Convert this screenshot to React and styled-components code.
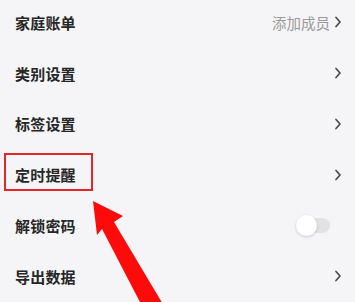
import React from 'react';
import styled, { createGlobalStyle } from 'styled-components';

const GlobalStyle = createGlobalStyle`
    html, body {
        margin: 0;
        padding: 0;
        background-color: #f5f5f7;
    }
    body {
        font-family: "Noto Sans CJK SC", "Noto Sans", sans-serif;
    }
`;

const items = [
    { label: '家庭账单', extra: '添加成员', type: 'link' },
    { label: '类别设置', type: 'link' },
    { label: '标签设置', type: 'link' },
    { label: '定时提醒', type: 'link', marked: true },
    { label: '解锁密码', type: 'toggle' },
    { label: '导出数据', type: 'link' },
];

function Chevron() {
    return (
        <svg width="8" height="12" viewBox="0 0 8 12">
            <path d="M2 1.5 L6 6 L2 10.5" fill="none" stroke="#4a4a4a" strokeWidth="1.7" strokeLinecap="round" strokeLinejoin="round" />
        </svg>
    );
}

function App() {
    return (
        <Page>
            <GlobalStyle />
            <List>
                {items.map((item) => (
                    <Row key={item.label}>
                        <Label>
                            {item.label}
                            {item.marked && <Mark />}
                        </Label>
                        <Right>
                            {item.extra && <Extra>{item.extra}</Extra>}
                            {item.type === 'link' ? <Chevron /> : <Switch><Knob /></Switch>}
                        </Right>
                    </Row>
                ))}
            </List>
            <Arrow width="355" height="302" viewBox="0 0 355 302">
                <polygon points="93,201 123,216 114,222 164,306 142,306 102,229 97,235" fill="#ff0a0a" />
            </Arrow>
        </Page>
    );
}

const Page = styled.div`
    position: relative;
    width: 355px;
    height: 302px;
    overflow: hidden;
    background-color: #f5f5f7;
`;

const List = styled.div`
    display: flex;
    flex-direction: column;
    margin-top: -3px;
`;

const Row = styled.div`
    display: flex;
    align-items: center;
    justify-content: space-between;
    height: 50.8px;
    padding: 0 13px 0 15px;
`;

const Label = styled.div`
    position: relative;
    font-size: 15px;
    font-weight: 600;
    color: #262626;
    letter-spacing: 0.2px;
`;

const Mark = styled.div`
    position: absolute;
    left: -11px;
    top: -11px;
    width: 85px;
    height: 34px;
    border: 2px solid #e3262a;
`;

const Right = styled.div`
    display: flex;
    align-items: center;
    gap: 4px;
`;

const Extra = styled.span`
    font-size: 14.5px;
    color: #9a9a9a;
`;

const Switch = styled.div`
    position: relative;
    width: 32px;
    height: 15px;
    border-radius: 8px;
    background-color: #e2e2e4;
    margin-right: 12px;
`;

const Knob = styled.div`
    position: absolute;
    left: -2px;
    top: -3px;
    width: 21px;
    height: 21px;
    border-radius: 50%;
    background-color: #fff;
    box-shadow: 0 1px 3px rgba(0, 0, 0, 0.18);
`;

const Arrow = styled.svg`
    position: absolute;
    left: 0;
    top: 0;
    pointer-events: none;
`;

export default App;
